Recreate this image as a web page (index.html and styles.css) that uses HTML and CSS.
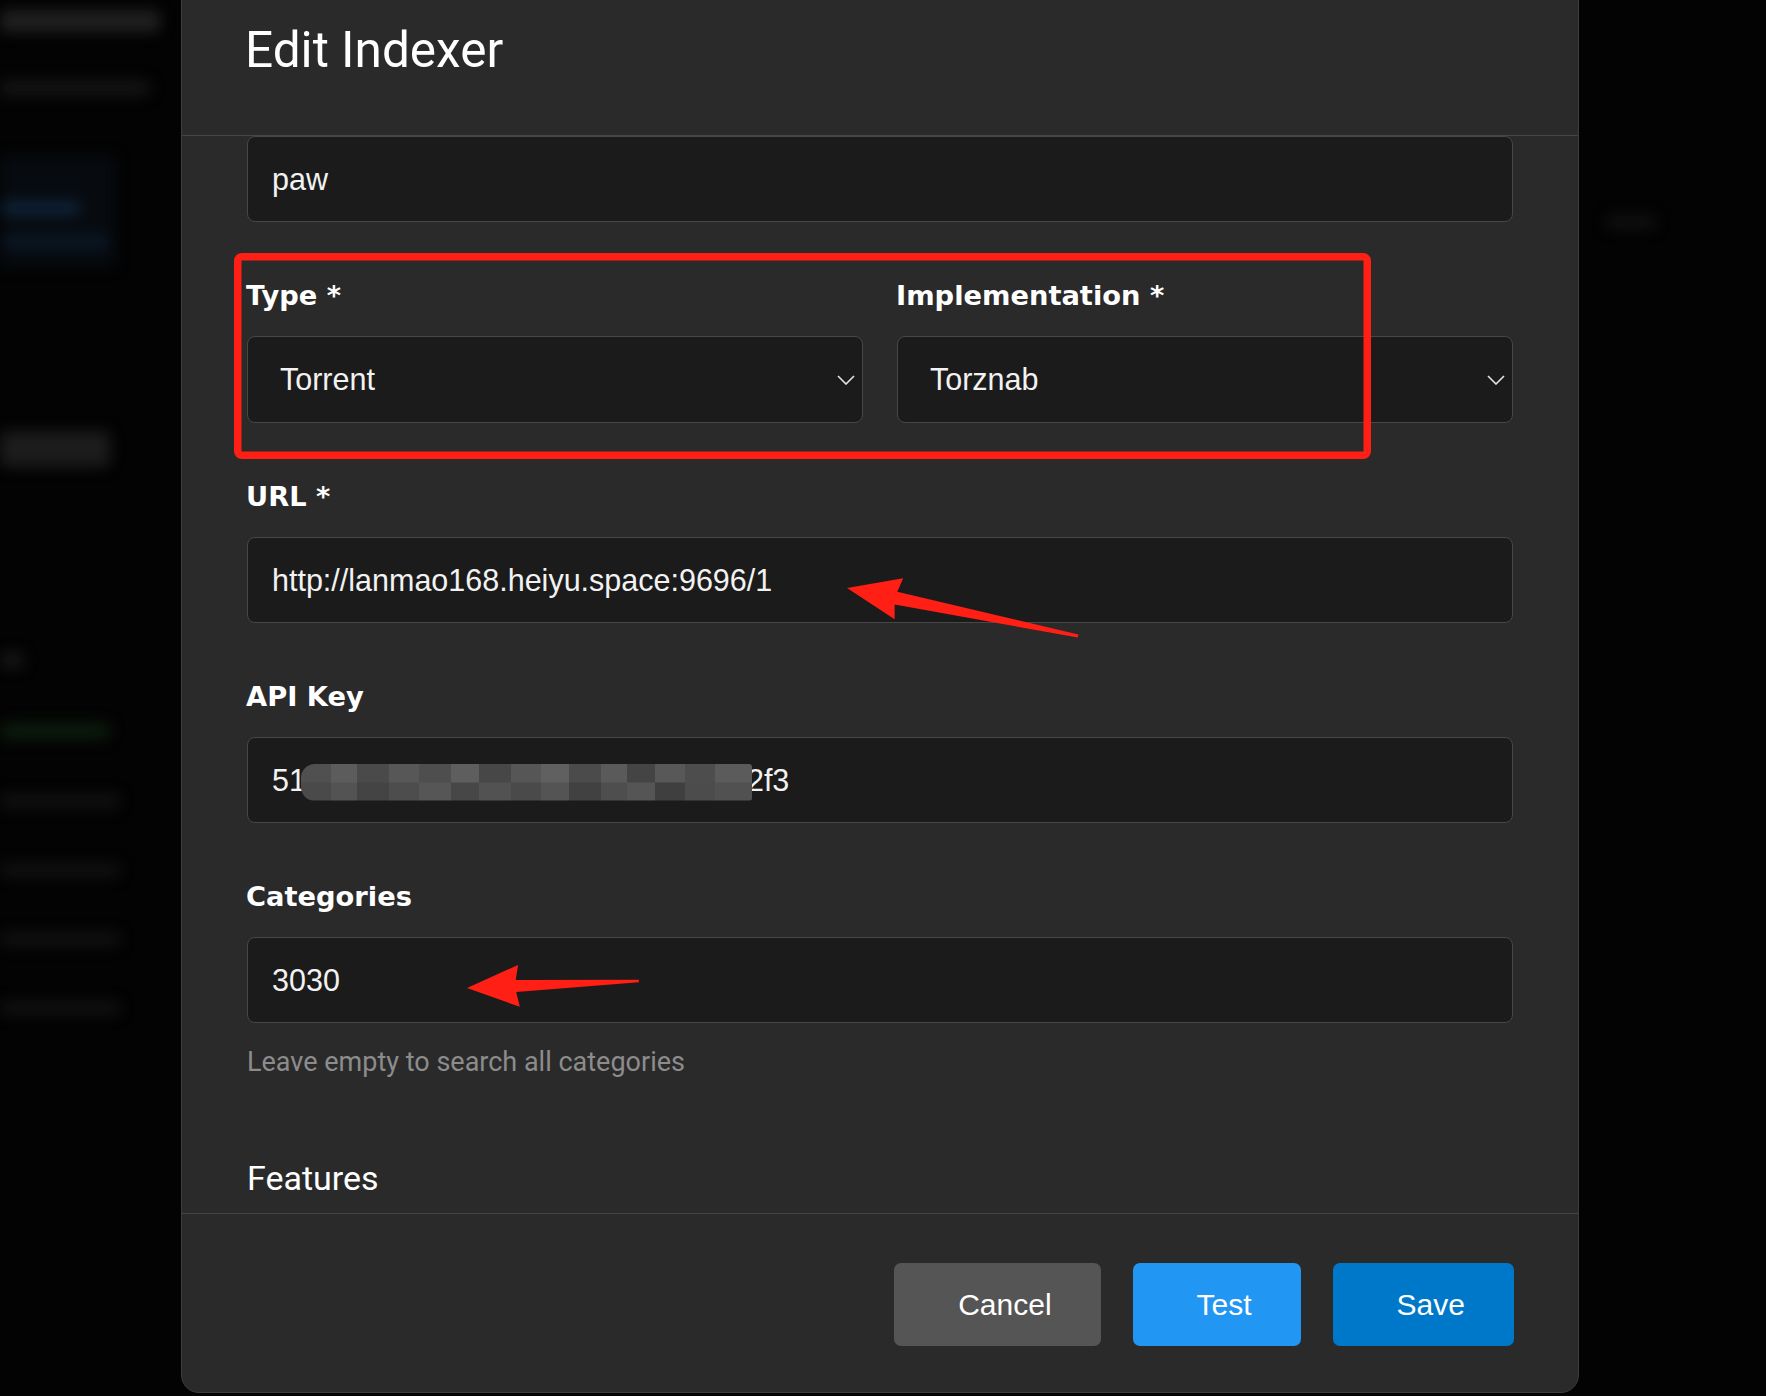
FILE: index.html
```html
<!DOCTYPE html>
<html lang="en">
<head>
<meta charset="utf-8">
<title>Edit Indexer</title>
<link rel="stylesheet" href="styles.css">
</head>
<body>
<div class="backdrop">
  <div class="ghost-col">
    <div class="ghost ghost-title"></div>
    <div class="ghost ghost-sub"></div>
    <div class="ghost-panel">
      <div class="ghost ghost-blue"></div>
      <div class="ghost ghost-blueline"></div>
    </div>
    <div class="ghost ghost-big"></div>
    <div class="ghost ghost-small"></div>
    <div class="ghost ghost-green"></div>
    <div class="ghost ghost-line"></div>
    <div class="ghost ghost-line"></div>
    <div class="ghost ghost-line"></div>
    <div class="ghost ghost-line"></div>
  </div>
  <div class="ghost-col ghost-right">
    <div class="ghost ghost-dot"></div>
  </div>
</div>

<div class="modal">
  <header class="modal-header">
    <h1 class="modal-title">Edit Indexer</h1>
  </header>

  <div class="modal-body">
    <div class="group">
      <div class="input">paw</div>
    </div>

    <div class="group row">
      <div class="field">
        <div class="label">Type *</div>
        <div class="select">
          <span>Torrent</span>
          <svg class="chevron" width="18" height="10" viewBox="0 0 18 10"><polyline points="1,1 9,9 17,1" fill="none" stroke="#e6e6e6" stroke-width="1.6"/></svg>
        </div>
      </div>
      <div class="field">
        <div class="label">Implementation *</div>
        <div class="select">
          <span>Torznab</span>
          <svg class="chevron" width="18" height="10" viewBox="0 0 18 10"><polyline points="1,1 9,9 17,1" fill="none" stroke="#e6e6e6" stroke-width="1.6"/></svg>
        </div>
      </div>
    </div>

    <div class="group">
      <div class="label">URL *</div>
      <div class="input">http://lanmao168.heiyu.space:9696/1</div>
    </div>

    <div class="group">
      <div class="label">API Key</div>
      <div class="input"><span>51</span><span class="mosaic"></span><span>2f3</span></div>
    </div>

    <div class="group group-help">
      <div class="label">Categories</div>
      <div class="input">3030</div>
      <div class="help">Leave empty to search all categories</div>
    </div>

    <h2 class="section-title">Features</h2>
  </div>

  <footer class="modal-footer">
    <button class="btn btn-cancel">Cancel</button>
    <button class="btn btn-test">Test</button>
    <button class="btn btn-save">Save</button>
  </footer>
</div>

<svg class="annotations" width="1766" height="1396" viewBox="0 0 1766 1396">
  <rect x="237.75" y="256.75" width="1129.5" height="198.5" rx="4" fill="none" stroke="#ff1f14" stroke-width="7.5"/>
  <polygon points="0,0 53,-21 50,-6.5 236,-1.6 236,1.6 50,6.5 53,21" transform="translate(847 588) rotate(11.74)" fill="#ff1f14"/>
  <polygon points="0,0 52,-21 49,-6 172,-1.3 172,1.3 49,6 52,21" transform="translate(467 988) rotate(-2.33)" fill="#ff1f14"/>
</svg>
</body>
</html>
```

FILE: styles.css
```css
html, body {
  margin: 0;
  padding: 0;
}

body {
  width: 1766px;
  height: 1396px;
  overflow: hidden;
  background: #030303;
  position: relative;
  font-family: "Liberation Sans", Arial, sans-serif;
}

/* blurred page behind the modal */
.backdrop {
  position: absolute;
  inset: 0;
  display: flex;
  justify-content: space-between;
  background: #030303;
}

.ghost-col {
  width: 175px;
  display: flex;
  flex-direction: column;
  filter: blur(7px);
}

.ghost {
  border-radius: 6px;
}

.ghost-title {
  margin-top: 10px;
  height: 22px;
  width: 160px;
  background: #202020;
}

.ghost-sub {
  margin-top: 48px;
  height: 16px;
  width: 150px;
  background: #141414;
}

.ghost-panel {
  margin-top: 60px;
  height: 110px;
  width: 115px;
  background: #070b10;
  display: flex;
  flex-direction: column;
  padding-top: 45px;
  box-sizing: border-box;
}

.ghost-blue {
  height: 14px;
  width: 80px;
  background: #0e2238;
}

.ghost-blueline {
  margin-top: 22px;
  height: 10px;
  width: 110px;
  background: #0b1a2b;
}

.ghost-big {
  margin-top: 165px;
  height: 36px;
  width: 110px;
  background: #1c1c1c;
}

.ghost-small {
  margin-top: 185px;
  height: 16px;
  width: 24px;
  background: #161616;
}

.ghost-green {
  margin-top: 55px;
  height: 16px;
  width: 110px;
  background: #0c1c0d;
}

.ghost-line {
  margin-top: 55px;
  height: 14px;
  width: 120px;
  background: #111;
}

.ghost-right {
  width: 160px;
  align-items: flex-end;
}

.ghost-dot {
  margin-top: 215px;
  margin-right: 110px;
  height: 14px;
  width: 50px;
  background: #101010;
}

/* modal */
.modal {
  position: absolute;
  left: 181px;
  top: -20px;
  width: 1398px;
  box-sizing: border-box;
  border: 1px solid #3d3d3d;
  border-radius: 0 0 18px 18px;
  background: #2a2a2a;
  display: flex;
  flex-direction: column;
  color: #fff;
}

.modal-header {
  height: 155px;
  box-sizing: border-box;
  padding: 45px 65px 0 63px;
  border-bottom: 1px solid #454545;
}

.modal-title {
  margin: 0;
  font-family: Roboto, "Liberation Sans", sans-serif;
  font-weight: 400;
  font-size: 49.5px;
  line-height: 1;
  color: #fff;
}

.modal-body {
  height: 1077px;
  box-sizing: border-box;
  padding: 0 65px;
  overflow: hidden;
  display: flex;
  flex-direction: column;
}

.group {
  margin-bottom: 58px;
  display: flex;
  flex-direction: column;
}

.row {
  display: grid;
  grid-template-columns: 1fr 1fr;
  column-gap: 34px;
}

.field {
  display: flex;
  flex-direction: column;
}

.label {
  font-family: "DejaVu Sans", Verdana, sans-serif;
  font-weight: 700;
  font-size: 27.3px;
  line-height: 32px;
  margin-bottom: 24px;
  margin-left: -1px;
  color: #fff;
}

.input,
.select {
  height: 86px;
  box-sizing: border-box;
  border: 1px solid #474747;
  border-radius: 8px;
  background: #1b1b1b;
  display: flex;
  align-items: center;
  font-family: "Liberation Sans", Arial, sans-serif;
  font-size: 30.5px;
  color: #f2f2f2;
  white-space: nowrap;
}

.input {
  padding: 0 24px;
}

.select {
  padding: 0 7px 0 32px;
  justify-content: space-between;
  height: 87px;
}

.chevron {
  display: block;
}

.mosaic {
  position: relative;
  z-index: 1;
  display: inline-block;
  align-self: center;
  width: 451px;
  height: 37px;
  margin: 4px -5px 0 -5px;
  border-radius: 14px 3px 3px 14px;
  filter: blur(0.5px);
  background:
    linear-gradient(90deg,
      #505050 0 30px, #5c5c5c 30px 56px, #4a4a4a 56px 88px, #575757 88px 118px,
      #4e4e4e 118px 150px, #5e5e5e 150px 178px, #474747 178px 210px, #565656 210px 240px,
      #606060 240px 268px, #4b4b4b 268px 300px, #5a5a5a 300px 326px, #444 326px 354px,
      #585858 354px 384px, #4d4d4d 384px 414px, #5b5b5b 414px 451px) top / 100% 50% no-repeat,
    linear-gradient(90deg,
      #4a4a4a 0 30px, #535353 30px 56px, #444 56px 88px, #4d4d4d 88px 118px,
      #565656 118px 150px, #474747 150px 178px, #525252 178px 210px, #4a4a4a 210px 240px,
      #545454 240px 268px, #414141 268px 300px, #4e4e4e 300px 326px, #555 326px 354px,
      #3f3f3f 354px 384px, #4c4c4c 384px 414px, #515151 414px 451px) bottom / 100% 50% no-repeat;
}

.group-help {
  margin-bottom: 78px;
}

.help {
  margin-top: 22px;
  font-family: Roboto, "Liberation Sans", sans-serif;
  font-size: 27px;
  line-height: 34px;
  color: #8c8c8c;
}

.section-title {
  margin: 0;
  font-family: Roboto, "Liberation Sans", sans-serif;
  font-weight: 400;
  font-size: 34px;
  line-height: 42px;
  color: #fff;
}

.modal-footer {
  border-top: 1px solid #454545;
  padding: 49px 64px 46px;
  display: flex;
  justify-content: flex-end;
  gap: 32px;
}

.btn {
  height: 83px;
  box-sizing: border-box;
  border: none;
  border-radius: 7px;
  padding: 0 49px 0 64px;
  font-family: "Liberation Sans", Arial, sans-serif;
  font-size: 30px;
  color: #fff;
  display: flex;
  align-items: center;
}

.btn-cancel {
  background: #555555;
}

.btn-test {
  background: #2196f3;
}

.btn-save {
  background: #0078ca;
}

.annotations {
  position: absolute;
  left: 0;
  top: 0;
  pointer-events: none;
}
```
